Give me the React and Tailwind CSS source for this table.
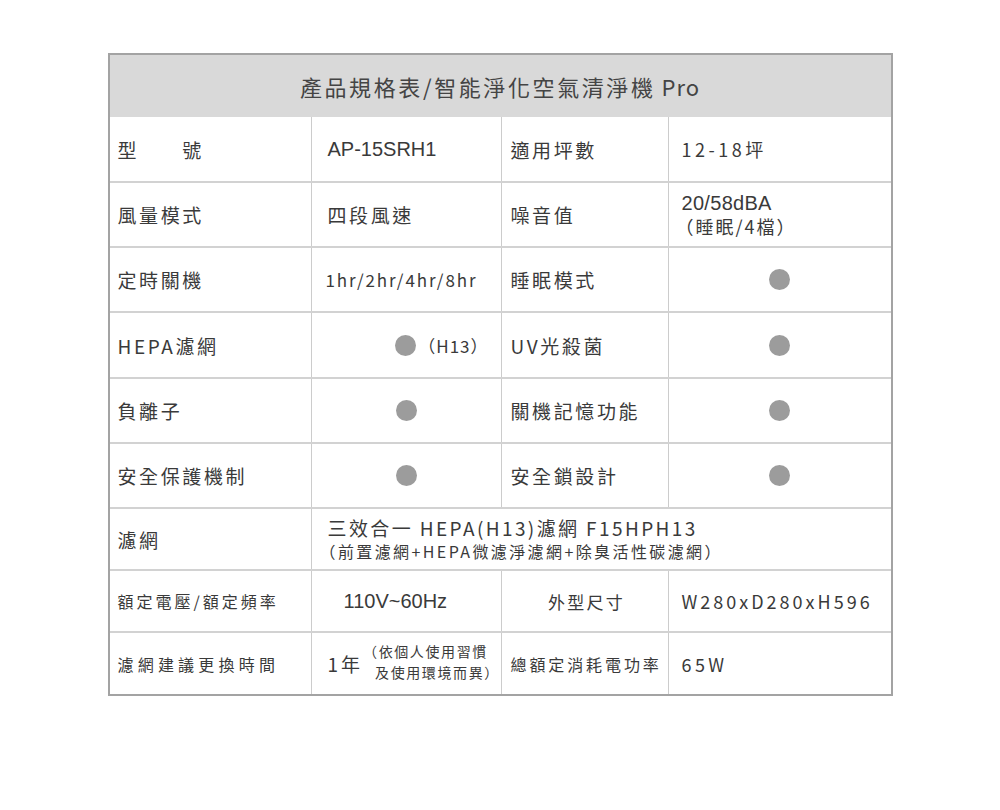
const arial = "font-['Liberation_Sans',Arial,sans-serif]";

function Dot() {
  return <span className="inline-block h-[21px] w-[21px] rounded-full bg-[#9c9c9c]" />;
}

function Row({ first, h, children }) {
  return (
    <div className={`flex ${h} ${first ? "" : "border-t-2 border-[#d2d2d2]"}`}>{children}</div>
  );
}

const c1 = "flex w-[201px] shrink-0 items-center pl-2";
const c2 = "flex w-[190px] shrink-0 items-center border-l border-[#cccccc]";
const c3 = "flex w-[167px] shrink-0 items-center border-l border-[#cccccc] pl-[9px]";
const c4 = "flex flex-1 items-center border-l border-[#cccccc] pl-[13px]";
const lbl = "text-[19px] leading-none tracking-[2.6px]";

export default function App() {
  return (
    <div className="min-h-[810px] bg-white pt-[53px] font-['Noto_Sans_CJK_TC','Noto_Sans',sans-serif] text-[#3a3a3a]">
      <div className="mx-auto w-[785px] border-2 border-[#a3a3a3]">
        <div className="flex h-[62px] items-center justify-center bg-[#d9d9d9] text-[22px] leading-none text-[#444]">
          <span className="tracking-[2.6px]">產品規格表/智能淨化空氣清淨機</span>
          <span className="ml-[6px] tracking-[1px]">Pro</span>
        </div>

        <Row first h="h-[64px]">
          <div className={c1}><span className={lbl}>型　　號</span></div>
          <div className={`${c2} pl-4`}><span className={`${arial} text-[20px] leading-none`}>AP-15SRH1</span></div>
          <div className={c3}><span className={lbl}>適用坪數</span></div>
          <div className={c4}><span className="text-[18px] leading-none tracking-[3.5px]">12-18坪</span></div>
        </Row>

        <Row h="h-[65px]">
          <div className={c1}><span className={lbl}>風量模式</span></div>
          <div className={`${c2} pl-4`}><span className={lbl}>四段風速</span></div>
          <div className={c3}><span className={lbl}>噪音值</span></div>
          <div className={`${c4} flex-col !items-start justify-center`}>
            <span className={`${arial} text-[20px] leading-[22px] tracking-[0.3px]`}>20/58dBA</span>
            <span className="-ml-[6px] text-[18px] leading-[24px] tracking-[2px]">（睡眠/4檔）</span>
          </div>
        </Row>

        <Row h="h-[65px]">
          <div className={c1}><span className={lbl}>定時關機</span></div>
          <div className={`${c2} pl-[14px]`}><span className="text-[17px] leading-none tracking-[1.9px]">1hr/2hr/4hr/8hr</span></div>
          <div className={c3}><span className={lbl}>睡眠模式</span></div>
          <div className={`${c4} justify-center !pl-0`}><Dot /></div>
        </Row>

        <Row h="h-[66px]">
          <div className={c1}><span className={lbl}>HEPA濾網</span></div>
          <div className={`${c2} justify-end gap-[2px] pr-[12px]`}>
            <Dot />
            <span className="text-[17px] leading-none tracking-[1px]">（H13）</span>
          </div>
          <div className={c3}><span className={lbl}>UV光殺菌</span></div>
          <div className={`${c4} justify-center !pl-0`}><Dot /></div>
        </Row>

        <Row h="h-[65px]">
          <div className={c1}><span className={lbl}>負離子</span></div>
          <div className={`${c2} justify-center`}><Dot /></div>
          <div className={c3}><span className={lbl}>關機記憶功能</span></div>
          <div className={`${c4} justify-center !pl-0`}><Dot /></div>
        </Row>

        <Row h="h-[65px]">
          <div className={c1}><span className={lbl}>安全保護機制</span></div>
          <div className={`${c2} justify-center`}><Dot /></div>
          <div className={c3}><span className={lbl}>安全鎖設計</span></div>
          <div className={`${c4} justify-center !pl-0`}><Dot /></div>
        </Row>

        <Row h="h-[62px]">
          <div className={c1}><span className={lbl}>濾網</span></div>
          <div className="flex flex-1 flex-col justify-center border-l border-[#cccccc] pl-4">
            <span className="text-[19px] leading-[24px] tracking-[2.4px]">三效合一 HEPA(H13)濾網 F15HPH13</span>
            <span className="-ml-[8px] text-[16px] leading-[22px] tracking-[2.4px]">（前置濾網+HEPA微濾淨濾網+除臭活性碳濾網）</span>
          </div>
        </Row>

        <Row h="h-[62px]">
          <div className={c1}><span className="text-[16px] leading-none tracking-[3px]">額定電壓/額定頻率</span></div>
          <div className={`${c2} pl-[32px]`}><span className={`${arial} text-[20px] leading-none`}>110V~60Hz</span></div>
          <div className={`${c3} justify-center !pl-[4px]`}><span className="text-[17px] leading-none tracking-[2.2px]">外型尺寸</span></div>
          <div className={c4}><span className="text-[18px] leading-none tracking-[3px]">W280xD280xH596</span></div>
        </Row>

        <Row h="h-[63px]">
          <div className={c1}><span className="text-[16px] leading-none tracking-[4.2px]">濾網建議更換時間</span></div>
          <div className={`${c2} pl-4`}>
            <span className="text-[19px] leading-none tracking-[3px]">1年</span>
            <div className="flex flex-col text-[14px] leading-[21px] tracking-[1.6px]">
              <span className="-mt-[4px]">（依個人使用習慣</span>
              <span className="pl-[12px]">及使用環境而異）</span>
            </div>
          </div>
          <div className={c3}><span className="text-[16px] leading-none tracking-[2.9px]">總額定消耗電功率</span></div>
          <div className={c4}><span className="text-[18px] leading-none tracking-[3.4px]">65W</span></div>
        </Row>
      </div>
    </div>
  );
}
